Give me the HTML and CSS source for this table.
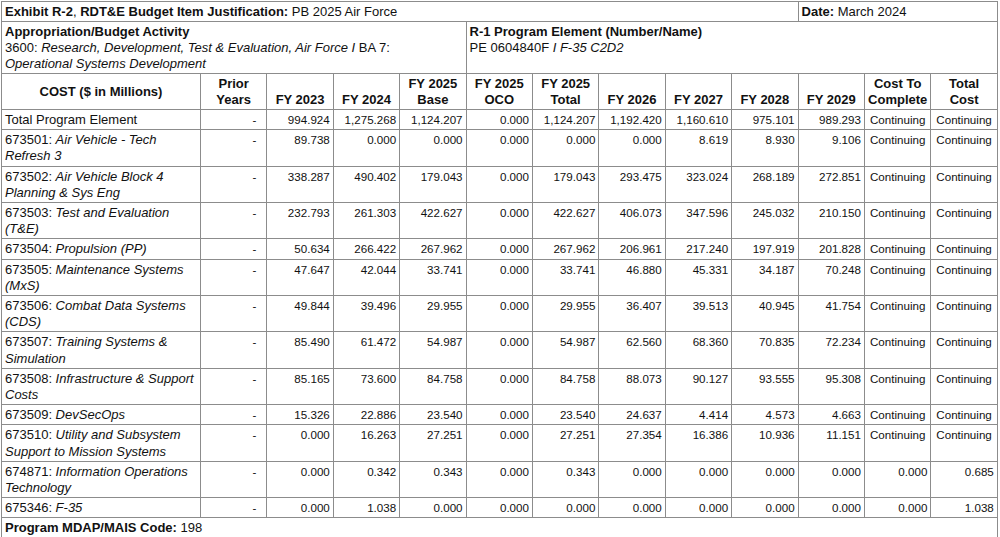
FILE: index.html
```html
<!DOCTYPE html>
<html>
<head>
<meta charset="utf-8">
<title>Exhibit R-2 PB 2025 Air Force</title>
<link rel="stylesheet" href="styles.css">
</head>
<body>
<div class="sheet">
<table class="r2">
<colgroup>
<col class="c-name">
<col class="c-num"><col class="c-num"><col class="c-num"><col class="c-num"><col class="c-num"><col class="c-num">
<col class="c-num"><col class="c-num"><col class="c-num"><col class="c-num"><col class="c-num"><col class="c-num">
</colgroup>
<tbody>
<tr class="top">
<td colspan="10"><b>Exhibit R-2</b>, <b>RDT&amp;E Budget Item Justification:</b> PB 2025 Air Force</td>
<td colspan="3"><b>Date:</b> March 2024</td>
</tr>
<tr class="top">
<td colspan="5"><b>Appropriation/Budget Activity</b><br>3600: <i>Research, Development, Test &amp; Evaluation, Air Force I</i> BA 7:<br><i>Operational Systems Development</i></td>
<td colspan="8"><b>R-1 Program Element (Number/Name)</b><br>PE 0604840F <i>I F-35 C2D2</i></td>
</tr>
<tr class="head">
<th class="cost">COST ($ in Millions)</th>
<th>Prior<br>Years</th>
<th>FY 2023</th>
<th>FY 2024</th>
<th>FY 2025<br>Base</th>
<th>FY 2025<br>OCO</th>
<th>FY 2025<br>Total</th>
<th>FY 2026</th>
<th>FY 2027</th>
<th>FY 2028</th>
<th>FY 2029</th>
<th>Cost To<br>Complete</th>
<th>Total<br>Cost</th>
</tr>
<tr>
<td class="name">Total Program Element</td>
<td class="d">-</td><td class="n">994.924</td><td class="n">1,275.268</td><td class="n">1,124.207</td><td class="n">0.000</td><td class="n">1,124.207</td><td class="n">1,192.420</td><td class="n">1,160.610</td><td class="n">975.101</td><td class="n">989.293</td><td class="c">Continuing</td><td class="c">Continuing</td>
</tr>
<tr>
<td class="name">673501: <i>Air Vehicle - Tech<br>Refresh 3</i></td>
<td class="d">-</td><td class="n">89.738</td><td class="n">0.000</td><td class="n">0.000</td><td class="n">0.000</td><td class="n">0.000</td><td class="n">0.000</td><td class="n">8.619</td><td class="n">8.930</td><td class="n">9.106</td><td class="c">Continuing</td><td class="c">Continuing</td>
</tr>
<tr>
<td class="name">673502: <i>Air Vehicle Block 4<br>Planning &amp; Sys Eng</i></td>
<td class="d">-</td><td class="n">338.287</td><td class="n">490.402</td><td class="n">179.043</td><td class="n">0.000</td><td class="n">179.043</td><td class="n">293.475</td><td class="n">323.024</td><td class="n">268.189</td><td class="n">272.851</td><td class="c">Continuing</td><td class="c">Continuing</td>
</tr>
<tr>
<td class="name">673503: <i>Test and Evaluation<br>(T&amp;E)</i></td>
<td class="d">-</td><td class="n">232.793</td><td class="n">261.303</td><td class="n">422.627</td><td class="n">0.000</td><td class="n">422.627</td><td class="n">406.073</td><td class="n">347.596</td><td class="n">245.032</td><td class="n">210.150</td><td class="c">Continuing</td><td class="c">Continuing</td>
</tr>
<tr>
<td class="name">673504: <i>Propulsion (PP)</i></td>
<td class="d">-</td><td class="n">50.634</td><td class="n">266.422</td><td class="n">267.962</td><td class="n">0.000</td><td class="n">267.962</td><td class="n">206.961</td><td class="n">217.240</td><td class="n">197.919</td><td class="n">201.828</td><td class="c">Continuing</td><td class="c">Continuing</td>
</tr>
<tr>
<td class="name">673505: <i>Maintenance Systems<br>(MxS)</i></td>
<td class="d">-</td><td class="n">47.647</td><td class="n">42.044</td><td class="n">33.741</td><td class="n">0.000</td><td class="n">33.741</td><td class="n">46.880</td><td class="n">45.331</td><td class="n">34.187</td><td class="n">70.248</td><td class="c">Continuing</td><td class="c">Continuing</td>
</tr>
<tr>
<td class="name">673506: <i>Combat Data Systems<br>(CDS)</i></td>
<td class="d">-</td><td class="n">49.844</td><td class="n">39.496</td><td class="n">29.955</td><td class="n">0.000</td><td class="n">29.955</td><td class="n">36.407</td><td class="n">39.513</td><td class="n">40.945</td><td class="n">41.754</td><td class="c">Continuing</td><td class="c">Continuing</td>
</tr>
<tr>
<td class="name">673507: <i>Training Systems &amp;<br>Simulation</i></td>
<td class="d">-</td><td class="n">85.490</td><td class="n">61.472</td><td class="n">54.987</td><td class="n">0.000</td><td class="n">54.987</td><td class="n">62.560</td><td class="n">68.360</td><td class="n">70.835</td><td class="n">72.234</td><td class="c">Continuing</td><td class="c">Continuing</td>
</tr>
<tr>
<td class="name">673508: <i>Infrastructure &amp; Support<br>Costs</i></td>
<td class="d">-</td><td class="n">85.165</td><td class="n">73.600</td><td class="n">84.758</td><td class="n">0.000</td><td class="n">84.758</td><td class="n">88.073</td><td class="n">90.127</td><td class="n">93.555</td><td class="n">95.308</td><td class="c">Continuing</td><td class="c">Continuing</td>
</tr>
<tr>
<td class="name">673509: <i>DevSecOps</i></td>
<td class="d">-</td><td class="n">15.326</td><td class="n">22.886</td><td class="n">23.540</td><td class="n">0.000</td><td class="n">23.540</td><td class="n">24.637</td><td class="n">4.414</td><td class="n">4.573</td><td class="n">4.663</td><td class="c">Continuing</td><td class="c">Continuing</td>
</tr>
<tr>
<td class="name">673510: <i>Utility and Subsystem<br>Support to Mission Systems</i></td>
<td class="d">-</td><td class="n">0.000</td><td class="n">16.263</td><td class="n">27.251</td><td class="n">0.000</td><td class="n">27.251</td><td class="n">27.354</td><td class="n">16.386</td><td class="n">10.936</td><td class="n">11.151</td><td class="c">Continuing</td><td class="c">Continuing</td>
</tr>
<tr>
<td class="name">674871: <i>Information Operations<br>Technology</i></td>
<td class="d">-</td><td class="n">0.000</td><td class="n">0.342</td><td class="n">0.343</td><td class="n">0.000</td><td class="n">0.343</td><td class="n">0.000</td><td class="n">0.000</td><td class="n">0.000</td><td class="n">0.000</td><td class="n">0.000</td><td class="n">0.685</td>
</tr>
<tr>
<td class="name">675346: <i>F-35</i></td>
<td class="d">-</td><td class="n">0.000</td><td class="n">1.038</td><td class="n">0.000</td><td class="n">0.000</td><td class="n">0.000</td><td class="n">0.000</td><td class="n">0.000</td><td class="n">0.000</td><td class="n">0.000</td><td class="n">0.000</td><td class="n">1.038</td>
</tr>
<tr class="top">
<td colspan="13" class="mdap"><b>Program MDAP/MAIS Code:</b> 198<br>&nbsp;</td>
</tr>
</tbody>
</table>
</div>
</body>
</html>
```

FILE: styles.css
```css
html, body {
  margin: 0;
  padding: 0;
  background: #ffffff;
}

body {
  color: #111111;
  font-family: "Liberation Sans", Arial, sans-serif;
}

.sheet {
  padding: 1px 0 0 1px;
}

.r2 {
  border-collapse: collapse;
  table-layout: fixed;
  width: 996px;
  font-size: 13px;
  line-height: 16px;
}

.c-name {
  width: 199px;
}

.c-num {
  width: 66.4px;
}

.r2 td,
.r2 th {
  border: 1px solid #8c8c8c;
  padding: 2px 3px 1px 3px;
  vertical-align: top;
  text-align: left;
  overflow: hidden;
}

.r2 tbody tr:nth-child(n+4) td {
  line-height: 16.2px;
}

.r2 th {
  font-weight: bold;
  text-align: center;
  vertical-align: bottom;
  padding: 2px 1px 1px 1px;
  white-space: nowrap;
}

.r2 th.cost {
  vertical-align: middle;
}

.r2 td.name {
  padding-left: 3px;
}

.r2 td.n {
  font-size: 11.6px;
  text-align: right;
  padding-right: 3px;
  padding-left: 1px;
  white-space: nowrap;
}

.r2 td.d {
  font-size: 11.6px;
  text-align: right;
  padding-right: 10px;
}

.r2 td.c {
  font-size: 11.6px;
  text-align: center;
  padding-left: 1px;
  padding-right: 1px;
  white-space: nowrap;
}
```
